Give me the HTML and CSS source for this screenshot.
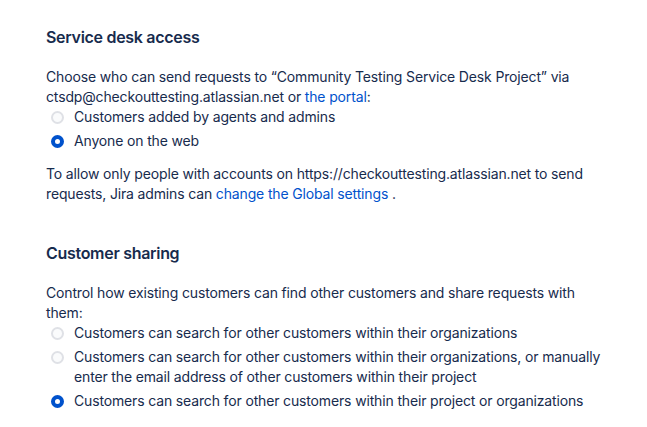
FILE: index.html
```html
<!DOCTYPE html>
<html lang="en">
<head>
<meta charset="utf-8">
<title>Customer permissions</title>
<link rel="stylesheet" href="styles.css">
</head>
<body>
<main class="page">
  <section class="section">
    <h2 class="section-title">Service desk access</h2>
    <p class="desc">Choose who can send requests to “Community Testing Service Desk Project” via ctsdp@checkouttesting.atlassian.net or <a class="link" href="#">the portal</a>:</p>
    <ul class="options">
      <li class="option"><span class="radio"></span><span class="label">Customers added by agents and admins</span></li>
      <li class="option"><span class="radio checked"></span><span class="label">Anyone on the web</span></li>
    </ul>
    <p class="note">To allow only people with accounts on https://checkouttesting.atlassian.net to send requests, Jira admins can <a class="link" href="#">change the Global settings</a> .</p>
  </section>
  <section class="section second">
    <h2 class="section-title">Customer sharing</h2>
    <p class="desc">Control how existing customers can find other customers and share requests with them:</p>
    <ul class="options">
      <li class="option"><span class="radio"></span><span class="label">Customers can search for other customers within their organizations</span></li>
      <li class="option"><span class="radio"></span><span class="label">Customers can search for other customers within their organizations, or manually enter the email address of other customers within their project</span></li>
      <li class="option"><span class="radio checked"></span><span class="label">Customers can search for other customers within their project or organizations</span></li>
    </ul>
  </section>
</main>
</body>
</html>
```
FILE: styles.css
```css
html, body {
  margin: 0;
  padding: 0;
  background: #ffffff;
}
body {
  font-family: Inter, "Liberation Sans", sans-serif;
  font-size: 14px;
  line-height: 20px;
  letter-spacing: -0.15px;
  color: #172B4D;
}
.page {
  padding: 27px 0 0 46px;
  width: 562px;
}
.section-title {
  margin: 0;
  font-size: 16px;
  line-height: 20px;
  font-weight: 600;
  letter-spacing: -0.3px;
  color: #172B4D;
}
.desc {
  margin: 20px 0 0;
}
.note {
  margin: 13px 0 0;
}
.link {
  color: #0052CC;
  text-decoration: none;
}
.options {
  list-style: none;
  margin: 0;
  padding: 0;
  display: flex;
  flex-direction: column;
  gap: 4px;
}
.option {
  display: flex;
  align-items: flex-start;
  gap: 10px;
}
.radio {
  flex: none;
  box-sizing: border-box;
  width: 13px;
  height: 13px;
  margin: 4px 0 0 5px;
  border-radius: 50%;
  border: 2px solid #DFE1E6;
  background: #FAFBFC;
}
.radio.checked {
  border: 4px solid #0052CC;
  background: #ffffff;
}
.second {
  margin-top: 39px;
}
```
